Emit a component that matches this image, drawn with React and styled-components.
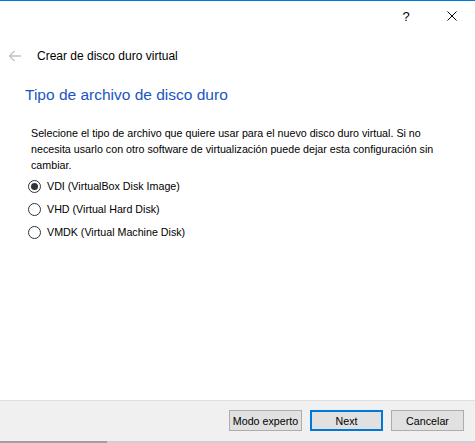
import React, { useState } from 'react'
import styled, { createGlobalStyle } from 'styled-components'

const Global = createGlobalStyle`
  html, body {
    margin: 0;
    padding: 0;
    background: #fff;
    overflow: hidden;
  }
  * {
    box-sizing: border-box;
  }
`

const Window = styled.div`
  width: 475px;
  height: 443px;
  display: flex;
  flex-direction: column;
  background: #fff;
  border-top: 1px solid #0078d7;
  font-family: 'Liberation Sans', Arial, sans-serif;
  font-size: 10.7px;
  color: #000;
`

const TitleBar = styled.div`
  height: 30px;
  display: flex;
  justify-content: flex-end;
`

const CaptionButton = styled.div`
  width: 46px;
  height: 30px;
  display: flex;
  align-items: center;
  justify-content: center;
  font-size: 13px;
  color: #000;
`

const Header = styled.div`
  display: flex;
  align-items: center;
  height: 16px;
  margin-top: 17px;
  padding-left: 8px;
`

const BackArrow = styled.div`
  width: 14px;
  height: 12px;
  display: flex;
  align-items: center;
  margin-right: 15px;
`

const HeaderTitle = styled.span`
  font-size: 12px;
`

const Content = styled.div`
  padding: 0 0 0 25px;
  margin-top: 21px;
`

const Heading = styled.h1`
  margin: 0;
  font-weight: normal;
  font-size: 15.5px;
  line-height: 20px;
  color: #1a55c4;
`

const Body = styled.div`
  padding-left: 6px;
  margin-top: 20px;
`

const Description = styled.p`
  margin: 0;
  width: 415px;
  line-height: 16px;
`

const RadioList = styled.div`
  display: flex;
  flex-direction: column;
  gap: 7px;
  margin: 5px 0 0 -3px;
`

const RadioRow = styled.label`
  display: flex;
  align-items: center;
  height: 16px;
  cursor: default;
`

const RadioCircle = styled.span`
  width: 13px;
  height: 13px;
  border-radius: 50%;
  border: 1px solid #333;
  background: #fff;
  display: flex;
  align-items: center;
  justify-content: center;
  margin-right: 6px;
  &::after {
    content: '';
    width: 7px;
    height: 7px;
    border-radius: 50%;
    background: ${(p) => (p.checked ? '#333' : 'transparent')};
  }
`

const Spacer = styled.div`
  flex: 1;
`

const Footer = styled.div`
  height: 43px;
  background: #f0f0f0;
  border-top: 1px solid #dfdfdf;
  display: flex;
  flex-direction: column;
`

const ButtonBar = styled.div`
  flex: 1;
  display: flex;
  justify-content: flex-end;
  align-items: flex-start;
  gap: 8px;
  padding: 9px 11px 0 0;
`

const Button = styled.button`
  width: 73px;
  height: 21px;
  padding: 0;
  white-space: nowrap;
  background: #e1e1e1;
  border: ${(p) => (p.$primary ? '2px solid #0078d7' : '1px solid #adadad')};
  font-family: 'Liberation Sans', Arial, sans-serif;
  font-size: 10.7px;
  color: #000;
`

const BottomEdge = styled.div`
  height: 2px;
  background: linear-gradient(to right, #a0a0a0 0, #a0a0a0 107px, #cfcfcf 107px);
`

const options = [
  'VDI (VirtualBox Disk Image)',
  'VHD (Virtual Hard Disk)',
  'VMDK (Virtual Machine Disk)',
]

export default function App() {
  const [selected, setSelected] = useState(0)
  return (
    <Window>
      <Global />
      <TitleBar>
        <CaptionButton>?</CaptionButton>
        <CaptionButton>
          <svg width="10" height="10" viewBox="0 0 10 10">
            <path d="M0.5 0.5 L9.5 9.5 M9.5 0.5 L0.5 9.5" stroke="#000" strokeWidth="1" />
          </svg>
        </CaptionButton>
      </TitleBar>
      <Header>
        <BackArrow>
          <svg width="14" height="12" viewBox="0 0 14 12">
            <path d="M13 6 H1.5 M6.5 1 L1.5 6 L6.5 11" stroke="#c2c2c2" strokeWidth="1.3" fill="none" />
          </svg>
        </BackArrow>
        <HeaderTitle>Crear de disco duro virtual</HeaderTitle>
      </Header>
      <Content>
        <Heading>Tipo de archivo de disco duro</Heading>
        <Body>
          <Description>
            Selecione el tipo de archivo que quiere usar para el nuevo disco duro virtual. Si no
            necesita usarlo con otro software de virtualización puede dejar esta configuración sin
            cambiar.
          </Description>
          <RadioList>
            {options.map((label, index) => (
              <RadioRow key={label} onClick={() => setSelected(index)}>
                <RadioCircle checked={selected === index} />
                {label}
              </RadioRow>
            ))}
          </RadioList>
        </Body>
      </Content>
      <Spacer />
      <Footer>
        <ButtonBar>
          <Button>Modo experto</Button>
          <Button $primary>Next</Button>
          <Button>Cancelar</Button>
        </ButtonBar>
        <BottomEdge />
      </Footer>
    </Window>
  )
}
